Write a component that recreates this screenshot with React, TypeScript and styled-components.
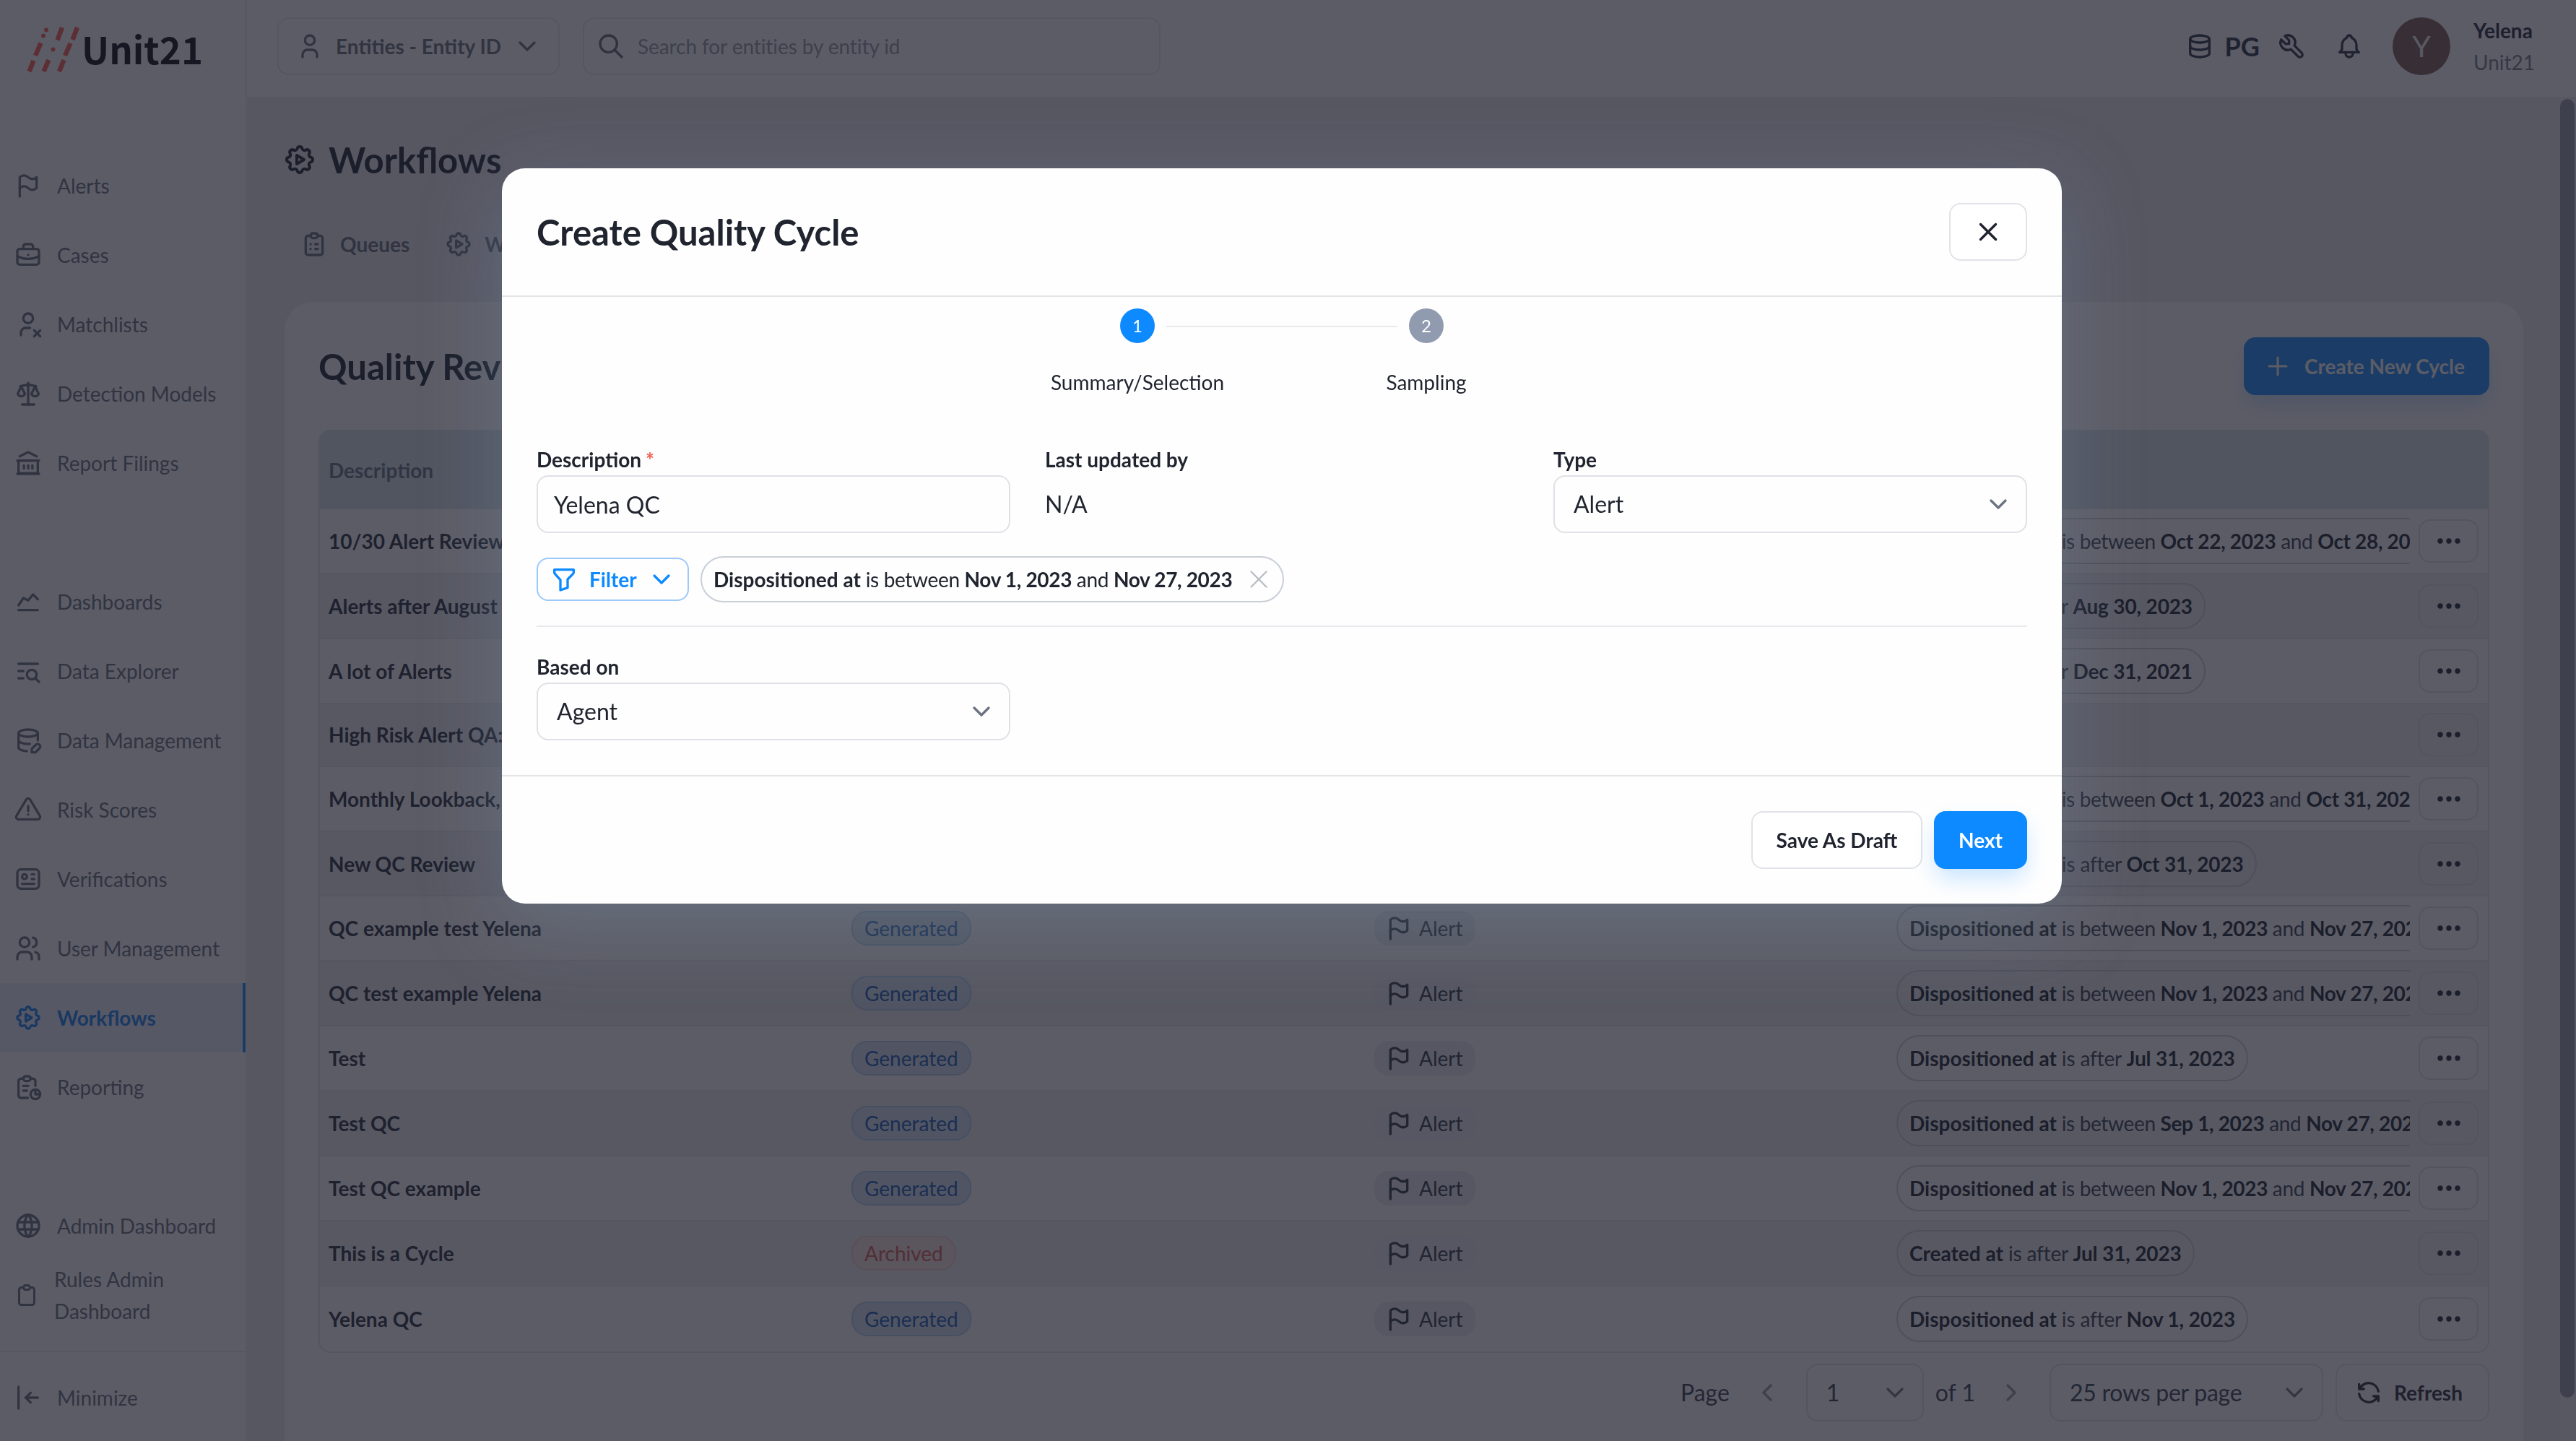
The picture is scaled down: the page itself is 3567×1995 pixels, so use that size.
import React from 'react';
import styled, { createGlobalStyle, css } from 'styled-components';

const GlobalStyle = createGlobalStyle`
  *, *::before, *::after { box-sizing: border-box; }
  html, body { margin: 0; height: 100%; overflow: hidden; }
  body {
    font-family: Lato, "Open Sans", sans-serif;
    font-size: 28px;
    line-height: 44px;
    color: #05101c;
    background: #fff;
  }
  button, input { font: inherit; color: inherit; }
`;

/* ---------- icons ---------- */

const icons = {
  flag: ['M5 5a5 5 0 0 1 7 0a5 5 0 0 0 7 0v9a5 5 0 0 1 -7 0a5 5 0 0 0 -7 0v-9z', 'M5 21v-7'],
  briefcase: [
    'M5 7h14a2 2 0 0 1 2 2v9a2 2 0 0 1 -2 2h-14a2 2 0 0 1 -2 -2v-9a2 2 0 0 1 2 -2z',
    'M8 7v-2a2 2 0 0 1 2 -2h4a2 2 0 0 1 2 2v2',
    'M12 12v.01',
    'M3 13a20 20 0 0 0 18 0',
  ],
  userX: ['M8 7a4 4 0 1 0 8 0a4 4 0 0 0 -8 0', 'M6 21v-2a4 4 0 0 1 4 -4h3.5', 'M22 22l-5 -5', 'M17 22l5 -5'],
  scale: [
    'M7 21h10',
    'M12 3v18',
    'M5.500 5.800l6.500 -1.300l6.500 1.300',
    'M6.200 6l-2.900 6.200a3.300 3.300 0 0 0 6 0z',
    'M17.800 6l-3.100 6.200a3.300 3.300 0 0 0 6 0z',
  ],
  bank: ['M5 6.500l7 -3.500l7 3.500', 'M4 10h16v10.500h-16z', 'M3 21h18', 'M3 10h18', 'M8.500 14v2.500', 'M12 14v2.500', 'M15.500 14v2.500'],
  chart: ['M4 19l16 0', 'M4 15l4 -6l4 2l4 -5l4 4'],
  listSearch: ['M11 15a4 4 0 1 0 8 0a4 4 0 1 0 -8 0', 'M18.500 18.500l2.500 2.500', 'M4 6h16', 'M4 12h4', 'M4 18h4'],
  databaseEdit: [
    'M4 6c0 1.657 3.582 3 8 3s8 -1.343 8 -3s-3.582 -3 -8 -3s-8 1.343 -8 3',
    'M4 6v6c0 1.657 3.582 3 8 3c.478 0 .947 -.016 1.402 -.046',
    'M20 12v-6',
    'M4 12v6c0 1.526 3.040 2.786 6.972 2.975',
    'M18.420 15.610a2.100 2.100 0 0 1 2.970 2.970l-3.390 3.420h-3v-3l3.420 -3.390z',
  ],
  alert: [
    'M12 9v4',
    'M10.363 3.591l-8.106 13.534a1.914 1.914 0 0 0 1.636 2.871h16.214a1.914 1.914 0 0 0 1.636 -2.870l-8.106 -13.536a1.914 1.914 0 0 0 -3.274 0z',
    'M12 16h.01',
  ],
  id: [
    'M3 7a3 3 0 0 1 3 -3h12a3 3 0 0 1 3 3v10a3 3 0 0 1 -3 3h-12a3 3 0 0 1 -3 -3z',
    'M7 10a2 2 0 1 0 4 0a2 2 0 1 0 -4 0',
    'M15 8h2',
    'M15 12h2',
    'M7 16h10',
  ],
  user: ['M8 7a4 4 0 1 0 8 0a4 4 0 0 0 -8 0', 'M6 21v-2a4 4 0 0 1 4 -4h4a4 4 0 0 1 4 4v2'],
  users: [
    'M5 7a4 4 0 1 0 8 0a4 4 0 1 0 -8 0',
    'M3 21v-2a4 4 0 0 1 4 -4h4a4 4 0 0 1 4 4v2',
    'M16 3.130a4 4 0 0 1 0 7.750',
    'M21 21v-2a4 4 0 0 0 -3 -3.850',
  ],
  automation: [
    'M10.325 4.317c.426 -1.756 2.924 -1.756 3.350 0a1.724 1.724 0 0 0 2.573 1.066c1.543 -.940 3.310 .826 2.370 2.370a1.724 1.724 0 0 0 1.065 2.572c1.756 .426 1.756 2.924 0 3.350a1.724 1.724 0 0 0 -1.066 2.573c.940 1.543 -.826 3.310 -2.370 2.370a1.724 1.724 0 0 0 -2.572 1.065c-.426 1.756 -2.924 1.756 -3.350 0a1.724 1.724 0 0 0 -2.573 -1.066c-1.543 .940 -3.310 -.826 -2.370 -2.370a1.724 1.724 0 0 0 -1.065 -2.572c-1.756 -.426 -1.756 -2.924 0 -3.350a1.724 1.724 0 0 0 1.066 -2.573c-.940 -1.543 .826 -3.310 2.370 -2.370c1 .608 2.296 .070 2.572 -1.065z',
    'M10 9v6l5 -3z',
  ],
  report: [
    'M8 5h-2a2 2 0 0 0 -2 2v12a2 2 0 0 0 2 2h5.697',
    'M18 14v4h4',
    'M18 11v-4a2 2 0 0 0 -2 -2h-2',
    'M8 5a2 2 0 0 1 2 -2h2a2 2 0 0 1 2 2a2 2 0 0 1 -2 2h-2a2 2 0 0 1 -2 -2z',
    'M14 18a4 4 0 1 0 8 0a4 4 0 1 0 -8 0',
    'M8 11h4',
    'M8 15h3',
  ],
  world: [
    'M3 12a9 9 0 1 0 18 0a9 9 0 1 0 -18 0',
    'M3.600 9h16.800',
    'M3.600 15h16.800',
    'M11.500 3a17 17 0 0 0 0 18',
    'M12.500 3a17 17 0 0 1 0 18',
  ],
  clipboard: [
    'M9 5h-2a2 2 0 0 0 -2 2v12a2 2 0 0 0 2 2h10a2 2 0 0 0 2 -2v-12a2 2 0 0 0 -2 -2h-2',
    'M9 5a2 2 0 0 1 2 -2h2a2 2 0 0 1 2 2a2 2 0 0 1 -2 2h-2a2 2 0 0 1 -2 -2z',
  ],
  clipboardList: [
    'M9 5h-2a2 2 0 0 0 -2 2v12a2 2 0 0 0 2 2h10a2 2 0 0 0 2 -2v-12a2 2 0 0 0 -2 -2h-2',
    'M9 5a2 2 0 0 1 2 -2h2a2 2 0 0 1 2 2a2 2 0 0 1 -2 2h-2a2 2 0 0 1 -2 -2z',
    'M9 12h.01',
    'M13 12h2',
    'M9 16h.01',
    'M13 16h2',
  ],
  minimize: ['M10 12h10', 'M10 12l4 4', 'M10 12l4 -4', 'M4 3v18'],
  chevronDown: ['M6 9l6 6l6 -6'],
  chevronLeft: ['M15 6l-6 6l6 6'],
  chevronRight: ['M9 6l6 6l-6 6'],
  search: ['M3 10a7 7 0 1 0 14 0a7 7 0 1 0 -14 0', 'M21 21l-6 -6'],
  database: [
    'M4 6a8 3 0 1 0 16 0a8 3 0 1 0 -16 0',
    'M4 6v6a8 3 0 0 0 16 0v-6',
    'M4 12v6a8 3 0 0 0 16 0v-6',
  ],
  tool: ['M7 10h3v-3l-3.500 -3.500a6 6 0 0 1 8 8l6 6a2 2 0 0 1 -3 3l-6 -6a6 6 0 0 1 -8 -8l3.500 3.500'],
  bell: [
    'M10 5a2 2 0 1 1 4 0a7 7 0 0 1 4 6v3a4 4 0 0 0 2 3h-16a4 4 0 0 0 2 -3v-3a7 7 0 0 1 4 -6',
    'M9 17v1a3 3 0 0 0 6 0v-1',
  ],
  plus: ['M12 4v16', 'M4 12h16'],
  close: ['M18 6l-12 12', 'M6 6l12 12'],
  filter: [
    'M4 4h16v2.172a2 2 0 0 1 -.586 1.414l-4.414 4.414v7l-6 2v-8.500l-4.480 -4.928a2 2 0 0 1 -.520 -1.345v-2.227z',
  ],
  refresh: ['M20 11a8.100 8.100 0 0 0 -15.500 -2m-.500 -4v4h4', 'M4 13a8.100 8.100 0 0 0 15.500 2m.500 4v-4h-4'],
};

type IconName = keyof typeof icons;

const Svg = styled.svg`
  flex: none;
  display: block;
  fill: none;
  stroke: currentColor;
  stroke-linecap: round;
  stroke-linejoin: round;
`;

const Icon = ({ name, size = 40, weight = 2 }: { name: IconName; size?: number; weight?: number }) => (
  <Svg viewBox="0 0 24 24" width={size} height={size} strokeWidth={weight} aria-hidden>
    {icons[name].map((d) => (
      <path key={d} d={d} />
    ))}
  </Svg>
);

const Dots = () => (
  <svg width="34" height="8" viewBox="0 0 34 8" fill="currentColor" aria-hidden>
    <circle cx="5" cy="4" r="3.700" />
    <circle cx="17" cy="4" r="3.700" />
    <circle cx="29" cy="4" r="3.700" />
  </svg>
);

const LogoMark = () => (
  <svg width="76" height="64" viewBox="36 37 76 64" fill="none" stroke="currentColor" strokeWidth="6.500" aria-hidden>
    <path d="M40.500 99L46.500 84M49 77L56.500 59.500M60.500 99L67.500 83M79.500 55.500L86 38M82 99L88.500 83M90 77L97.500 60M100.500 55L107 38" />
    <g fill="currentColor" stroke="none">
      <circle cx="60" cy="49.500" r="3" />
      <circle cx="64" cy="41.500" r="3" />
      <circle cx="73.500" cy="68.500" r="3" />
    </g>
  </svg>
);

/* ---------- shell ---------- */

const Shell = styled.div`
  display: flex;
  width: 100vw;
  height: 100vh;
  overflow: hidden;
`;

const Sidebar = styled.nav`
  flex: none;
  width: 342px;
  display: flex;
  flex-direction: column;
  background: #fff;
  border-right: 2px solid #eeeff3;
`;

const Logo = styled.div`
  display: flex;
  align-items: center;
  height: 138px;
  padding-left: 36px;
  gap: 1px;
  color: #ff5a4a;
`;

const LogoText = styled.span`
  margin-bottom: 4px;
  font-family: "Noto Sans CJK JP", "DejaVu Sans", sans-serif;
  font-weight: 700;
  font-size: 51px;
  line-height: 64px;
  color: #00000a;
`;

const NavGroup = styled.div<{ $top: number }>`
  display: flex;
  flex-direction: column;
  margin-top: ${(p) => p.$top}px;
`;

const NavItem = styled.a<{ $active?: boolean }>`
  display: flex;
  align-items: center;
  gap: 20px;
  height: 96px;
  padding-left: 19px;
  color: #5c6b78;
  border-right: 4px solid transparent;
  ${(p) =>
    p.$active &&
    css`
      color: #0a7bf0;
      font-weight: 700;
      background: #eaf1f9;
      border-right-color: #0a84ff;
    `}
`;

const NavFoot = styled.div`
  margin-top: 29px;
  border-top: 2px solid #e6e7ec;
  padding-top: 15px;
`;

const Body = styled.div`
  flex: 1;
  min-width: 0;
  display: flex;
  flex-direction: column;
`;

const TopBar = styled.header`
  flex: none;
  display: flex;
  align-items: center;
  height: 134px;
  padding: 0 55px 6px 42px;
  background: #fff;
`;

const EntitySelect = styled.div`
  display: flex;
  align-items: center;
  width: 391px;
  height: 80px;
  padding-left: 23px;
  border: 2px solid #e4e7eb;
  border-radius: 16px;
  font-weight: 700;
  color: #5c6b78;
  & > span { margin: 0 16px 0 16px; }
`;

const SearchBox = styled.div`
  display: flex;
  align-items: center;
  gap: 17px;
  width: 800px;
  height: 80px;
  margin-left: 32px;
  padding-left: 17px;
  border: 2px solid #e4e7eb;
  border-radius: 16px;
  color: #56646f;
  & > span { color: #8b98a4; letter-spacing: -0.08px; }
`;

const TopActions = styled.div`
  display: flex;
  align-items: center;
  margin-left: auto;
  color: #1f2937;
`;

const Region = styled.span`
  margin: 0 24px 0 15px;
  font-size: 36px;
  font-weight: 700;
`;

const Bell = styled.span`
  margin: 0 40px 0 40px;
`;

const Avatar = styled.div`
  display: grid;
  place-items: center;
  width: 80px;
  height: 80px;
  border-radius: 50%;
  background: #7c5550;
  color: #f0f0f0;
  font-size: 41px;
`;

const UserInfo = styled.div`
  display: flex;
  flex-direction: column;
  width: 87px;
  margin-left: 32px;
  color: #6b7a87;
  & > b { color: #14202c; }
`;

/* ---------- page ---------- */

const Page = styled.main`
  flex: 1;
  min-height: 0;
  display: flex;
  background: #ebebf0;
`;

const Content = styled.div`
  flex: 1;
  min-width: 0;
  display: flex;
  flex-direction: column;
  padding: 62px 51px 0 52px;
`;

const ScrollTrack = styled.div`
  flex: none;
  width: 22px;
  padding: 3px 2px 0 0;
  background: #f0f0f4;
`;

const ScrollThumb = styled.div`
  height: 1798px;
  border-radius: 10px;
  background: #9098a2;
`;

const Heading = styled.h1`
  display: flex;
  align-items: center;
  gap: 16px;
  margin: 0 0 0 -3px;
  height: 49px;
  font-size: 49px;
  font-weight: 700;
  color: #0f1b27;
`;

const Tabs = styled.div`
  display: flex;
  align-items: center;
  gap: 48px;
  height: 40px;
  margin: 73px 0 60px 21px;
`;

const Tab = styled.div`
  display: flex;
  align-items: center;
  gap: 16px;
  font-weight: 700;
  color: #5c6b78;
`;

const Card = styled.section`
  flex: 1;
  min-height: 0;
  padding: 49px 47px 0 47px;
  border-radius: 40px 40px 0 0;
  background: #fff;
`;

const CardHead = styled.div`
  display: flex;
  align-items: center;
  justify-content: space-between;
  height: 80px;
`;

const CardTitle = styled.h2`
  margin: 0;
  font-size: 49px;
  font-weight: 700;
  color: #0f1b27;
`;

const Button = styled.button<{ $primary?: boolean; $width: number; $gap?: number; $nudge?: number }>`
  display: flex;
  align-items: center;
  justify-content: center;
  gap: ${(p) => p.$gap ?? 0}px;
  width: ${(p) => p.$width}px;
  height: 80px;
  padding: 0 ${(p) => p.$nudge ?? 0}px 0 0;
  border: 2px solid #e1e3e8;
  border-radius: 16px;
  background: #fff;
  font-size: 28px;
  font-weight: 700;
  color: #20242f;
  ${(p) =>
    p.$primary &&
    css`
      border: 0;
      background: #0d8aff;
      color: #fff;
      box-shadow: 0 16px 32px -4px rgba(13, 138, 255, 0.24);
    `}
`;

const Table = styled.div`
  margin-top: 48px;
  border: 2px solid #e3e6ea;
  border-top: 0;
  border-radius: 16px;
  overflow: hidden;
`;

const HeadRow = styled.div`
  display: flex;
  align-items: center;
  height: 110px;
  padding: 2px 0 0 12px;
  background: #d7e3e9;
  font-weight: 700;
  color: #60717f;
`;

const Row = styled.div<{ $short?: boolean }>`
  display: grid;
  grid-template-columns: 721px 724px 723px 726px 1fr;
  align-items: center;
  height: ${(p) => (p.$short ? 87 : 89.9)}px;
  border-bottom: 2px solid #e6e8ec;
  &:nth-child(odd) { background: #edeef1; }
  &:last-child { border-bottom: 0; }
`;

const Cell = styled.div<{ $left?: number }>`
  display: flex;
  min-width: 0;
  overflow: hidden;
  white-space: nowrap;
  padding-left: ${(p) => p.$left ?? 15}px;
`;

const Name = styled.span`
  font-weight: 700;
  color: #1a2633;
`;

const Status = styled.span<{ $archived?: boolean }>`
  height: 48px;
  padding: 0 16px;
  border: 2px solid ${(p) => (p.$archived ? '#f5cfc6' : '#aed0ee')};
  border-radius: 22px;
  background: ${(p) => (p.$archived ? '#f9e4de' : '#d6e5f2')};
  color: ${(p) => (p.$archived ? '#d8574c' : '#0c57b4')};
`;

const TypeTag = styled.span`
  display: flex;
  align-items: center;
  gap: 8px;
  height: 48px;
  padding: 0 17px 0 14px;
  border-radius: 20px;
  background: #e7ebef;
  color: #26323e;
`;

const Pill = styled.span<{ $modal?: boolean; $range?: boolean }>`
  display: flex;
  flex: none;
  align-items: center;
  height: 64px;
  padding: 0 16px;
  border: 2px solid #c9cfd6;
  border-radius: 32px;
  white-space: pre;
  letter-spacing: ${(p) => (p.$range ? -0.34 : -0.16)}px;
  color: ${(p) => (p.$modal ? '#20242f' : '#2e3a46')};
  & > b { color: ${(p) => (p.$modal ? '#20242f' : '#0f1b27')}; }
  & > b:first-child { letter-spacing: 0; }
  & > svg { margin: 0 -4px 0 16px; color: #b9bbc3; }
`;

const MoreButton = styled.div`
  display: grid;
  place-items: center;
  width: 83px;
  height: 60px;
  margin-left: 12px;
  border: 2px solid #dbe0e5;
  border-radius: 16px;
  color: #0f1b27;
`;

const Pager = styled.div`
  display: flex;
  align-items: center;
  justify-content: flex-end;
  margin-top: 15px;
  font-size: 32px;
  color: #2e3a46;
`;

const PagerArrow = styled.span<{ $left: number; $right: number }>`
  margin: 0 ${(p) => p.$right}px 0 ${(p) => p.$left}px;
  color: #8b98a4;
`;

const PageTotal = styled.span`
  margin-left: 16px;
`;

const Select = styled.div<{ $width?: number; $right?: number }>`
  display: flex;
  align-items: center;
  justify-content: space-between;
  width: ${(p) => (p.$width ? `${p.$width}px` : '100%')};
  height: 80px;
  margin-right: ${(p) => p.$right ?? 0}px;
  padding: 0 18px 0 26px;
  border: 2px solid #e0e1e6;
  border-radius: 16px;
  font-size: 32px;
  & > svg { color: #6b7381; }
`;

const PageSize = styled.span`
  letter-spacing: -0.25px;
`;

/* ---------- dialog ---------- */

const Overlay = styled.div`
  position: fixed;
  inset: 0;
  padding: 233px 0 0 695px;
  background: rgba(32, 31, 45, 0.73);
`;

const Dialog = styled.div`
  display: flex;
  flex-direction: column;
  width: 2160px;
  height: 1018px;
  border-radius: 32px;
  background: #fefefe;
  color: #20242f;
  box-shadow: 0 28px 108px rgba(122, 146, 166, 0.36);
`;

const DialogHead = styled.div`
  display: flex;
  align-items: center;
  justify-content: space-between;
  height: 178px;
  padding: 0 48px;
  border-bottom: 2px solid #e4e5e8;
`;

const DialogTitle = styled.h2`
  margin: 0;
  font-size: 49px;
  font-weight: 700;
`;

const Stepper = styled.div`
  display: flex;
  justify-content: center;
  align-items: flex-start;
  padding: 16px 0 0 0;
`;

const Step = styled.div`
  display: flex;
  flex-direction: column;
  align-items: center;
  gap: 32px;
  width: 48px;
  white-space: nowrap;
`;

const StepDot = styled.div<{ $active?: boolean }>`
  display: grid;
  place-items: center;
  flex: none;
  width: 48px;
  height: 48px;
  border-radius: 50%;
  background: ${(p) => (p.$active ? '#0d8aff' : '#919bb0')};
  color: #fff;
  font-size: 24px;
`;

const StepLine = styled.div`
  width: 320px;
  height: 2px;
  margin: 24px 16px 0;
  background: #e9eaed;
`;

const Form = styled.div`
  flex: 1;
  padding: 63px 48px 0;
`;

const Fields = styled.div`
  display: grid;
  grid-template-columns: repeat(3, 1fr);
  column-gap: 48px;
`;

const Label = styled.div`
  font-weight: 700;
`;

const Required = styled.span`
  margin-left: 6px;
  color: #f0604f;
`;

const TextInput = styled.input`
  display: block;
  width: 100%;
  height: 80px;
  padding: 0 22px;
  border: 2px solid #e0e1e6;
  border-radius: 16px;
  background: transparent;
  font-size: 32px;
`;

const ReadOnly = styled.div`
  font-size: 32px;
  line-height: 80px;
`;

const FilterBar = styled.div`
  display: flex;
  align-items: center;
  gap: 16px;
  margin-top: 32px;
  padding-bottom: 32px;
  border-bottom: 2px solid #e9eaed;
`;

const FilterButton = styled.button`
  display: flex;
  align-items: center;
  width: 211px;
  height: 60px;
  padding: 0 0 0 16px;
  border: 2px solid #9cc8fb;
  border-radius: 16px;
  background: transparent;
  font-weight: 700;
  color: #0d8aff;
  & > span { margin: 0 14px 0 15px; }
`;

const BasedOn = styled.div`
  margin-top: 33px;
`;

const DialogFoot = styled.div`
  display: flex;
  justify-content: flex-end;
  gap: 16px;
  height: 178px;
  padding: 48px 48px 0 0;
  border-top: 2px solid #e4e5e8;
`;

/* ---------- data ---------- */

const navMain: [IconName, string][] = [
  ['flag', 'Alerts'],
  ['briefcase', 'Cases'],
  ['userX', 'Matchlists'],
  ['scale', 'Detection Models'],
  ['bank', 'Report Filings'],
];

const navTools: [IconName, string][] = [
  ['chart', 'Dashboards'],
  ['listSearch', 'Data Explorer'],
  ['databaseEdit', 'Data Management'],
  ['alert', 'Risk Scores'],
  ['id', 'Verifications'],
  ['users', 'User Management'],
  ['automation', 'Workflows'],
  ['report', 'Reporting'],
];

type Rule = { field: string; op: string; from: string; to?: string };

const disp = (from: string, to?: string): Rule => ({
  field: 'Dispositioned at',
  op: to ? 'is between' : 'is after',
  from,
  to,
});

const rows: { name: string; archived?: boolean; rule?: Rule }[] = [
  { name: '10/30 Alert Review', rule: disp('Oct 22, 2023', 'Oct 28, 2023') },
  { name: 'Alerts after August', rule: { field: 'Created at', op: 'is after', from: 'Aug 30, 2023' } },
  { name: 'A lot of Alerts', rule: { field: 'Created at', op: 'is after', from: 'Dec 31, 2021' } },
  { name: 'High Risk Alert QA:' },
  { name: 'Monthly Lookback,', rule: disp('Oct 1, 2023', 'Oct 31, 2023') },
  { name: 'New QC Review', rule: disp('Oct 31, 2023') },
  { name: 'QC example test Yelena', rule: disp('Nov 1, 2023', 'Nov 27, 2023') },
  { name: 'QC test example Yelena', rule: disp('Nov 1, 2023', 'Nov 27, 2023') },
  { name: 'Test', rule: disp('Jul 31, 2023') },
  { name: 'Test QC', rule: disp('Sep 1, 2023', 'Nov 27, 2023') },
  { name: 'Test QC example', rule: disp('Nov 1, 2023', 'Nov 27, 2023') },
  { name: 'This is a Cycle', archived: true, rule: { field: 'Created at', op: 'is after', from: 'Jul 31, 2023' } },
  { name: 'Yelena QC', rule: disp('Nov 1, 2023') },
];

const RulePill = ({ rule, modal }: { rule: Rule; modal?: boolean }) => (
  <Pill $modal={modal} $range={!!rule.to}>
    <b>{rule.field}</b>
    {` ${rule.op} `}
    <b>{rule.from}</b>
    {rule.to && (
      <>
        {' and '}
        <b>{rule.to}</b>
      </>
    )}
    {modal && <Icon name="close" size={42} weight={1.3} />}
  </Pill>
);

export default function App() {
  return (
    <>
      <GlobalStyle />
      <Shell>
        <Sidebar>
          <Logo>
            <LogoMark />
            <LogoText>Unit21</LogoText>
          </Logo>
          <NavGroup $top={71}>
            {navMain.map(([icon, label]) => (
              <NavItem key={label}>
                <Icon name={icon} />
                {label}
              </NavItem>
            ))}
          </NavGroup>
          <NavGroup $top={96}>
            {navTools.map(([icon, label]) => (
              <NavItem key={label} $active={label === 'Workflows'}>
                <Icon name={icon} />
                {label}
              </NavItem>
            ))}
          </NavGroup>
          <NavGroup $top={96}>
            <NavItem>
              <Icon name="world" />
              Admin Dashboard
            </NavItem>
            <NavItem>
              <Icon name="clipboard" size={36} />
              <span>
                Rules Admin
                <br />
                Dashboard
              </span>
            </NavItem>
          </NavGroup>
          <NavFoot>
            <NavItem>
              <Icon name="minimize" />
              Minimize
            </NavItem>
          </NavFoot>
        </Sidebar>

        <Body>
          <TopBar>
            <EntitySelect>
              <Icon name="user" />
              <span>Entities - Entity ID</span>
              <Icon name="chevronDown" />
            </EntitySelect>
            <SearchBox>
              <Icon name="search" />
              <span>Search for entities by entity id</span>
            </SearchBox>
            <TopActions>
              <Icon name="database" />
              <Region>PG</Region>
              <Icon name="tool" />
              <Bell>
                <Icon name="bell" />
              </Bell>
              <Avatar>Y</Avatar>
              <UserInfo>
                <b>Yelena</b>
                <span>Unit21</span>
              </UserInfo>
            </TopActions>
          </TopBar>

          <Page>
            <Content>
              <Heading>
                <Icon name="automation" size={48} />
                Workflows
              </Heading>
              <Tabs>
                <Tab>
                  <Icon name="clipboardList" />
                  Queues
                </Tab>
                <Tab>
                  <Icon name="automation" />
                  Workflows
                </Tab>
              </Tabs>
              <Card>
                <CardHead>
                  <CardTitle>Quality Reviews</CardTitle>
                  <Button $primary $width={340} $gap={19} $nudge={5}>
                    <Icon name="plus" size={36} weight={2} />
                    Create New Cycle
                  </Button>
                </CardHead>
                <Table>
                  <HeadRow>Description</HeadRow>
                  {rows.map((row) => (
                    <Row key={row.name} $short={!row.rule}>
                      <Cell $left={12}>
                        <Name>{row.name}</Name>
                      </Cell>
                      <Cell>
                        <Status $archived={row.archived}>{row.archived ? 'Archived' : 'Generated'}</Status>
                      </Cell>
                      <Cell>
                        <TypeTag>
                          <Icon name="flag" />
                          Alert
                        </TypeTag>
                      </Cell>
                      <Cell>{row.rule && <RulePill rule={row.rule} />}</Cell>
                      <MoreButton>
                        <Dots />
                      </MoreButton>
                    </Row>
                  ))}
                </Table>
                <Pager>
                  Page
                  <PagerArrow $left={32} $right={34}>
                    <Icon name="chevronLeft" />
                  </PagerArrow>
                  <Select $width={163}>
                    1
                    <Icon name="chevronDown" />
                  </Select>
                  <PageTotal>of 1</PageTotal>
                  <PagerArrow $left={30} $right={33}>
                    <Icon name="chevronRight" />
                  </PagerArrow>
                  <Select $width={379} $right={17}>
                    <PageSize>25 rows per page</PageSize>
                    <Icon name="chevronDown" />
                  </Select>
                  <Button $width={213} $gap={15} $nudge={11}>
                    <Icon name="refresh" />
                    Refresh
                  </Button>
                </Pager>
              </Card>
            </Content>
            <ScrollTrack>
              <ScrollThumb />
            </ScrollTrack>
          </Page>
        </Body>
      </Shell>

      <Overlay>
        <Dialog role="dialog">
          <DialogHead>
            <DialogTitle>Create Quality Cycle</DialogTitle>
            <Button $width={108}>
              <Icon name="close" size={42} weight={2} />
            </Button>
          </DialogHead>
          <Stepper>
            <Step>
              <StepDot $active>1</StepDot>
              Summary/Selection
            </Step>
            <StepLine />
            <Step>
              <StepDot>2</StepDot>
              Sampling
            </Step>
          </Stepper>
          <Form>
            <Fields>
              <div>
                <Label>
                  Description
                  <Required>*</Required>
                </Label>
                <TextInput defaultValue="Yelena QC" />
              </div>
              <div>
                <Label>Last updated by</Label>
                <ReadOnly>N/A</ReadOnly>
              </div>
              <div>
                <Label>Type</Label>
                <Select>
                  Alert
                  <Icon name="chevronDown" />
                </Select>
              </div>
            </Fields>
            <FilterBar>
              <FilterButton>
                <Icon name="filter" />
                <span>Filter</span>
                <Icon name="chevronDown" />
              </FilterButton>
              <RulePill rule={disp('Nov 1, 2023', 'Nov 27, 2023')} modal />
            </FilterBar>
            <BasedOn>
              <Label>Based on</Label>
              <Select $width={656}>
                Agent
                <Icon name="chevronDown" />
              </Select>
            </BasedOn>
          </Form>
          <DialogFoot>
            <Button $width={237}>Save As Draft</Button>
            <Button $primary $width={129}>
              Next
            </Button>
          </DialogFoot>
        </Dialog>
      </Overlay>
    </>
  );
}
